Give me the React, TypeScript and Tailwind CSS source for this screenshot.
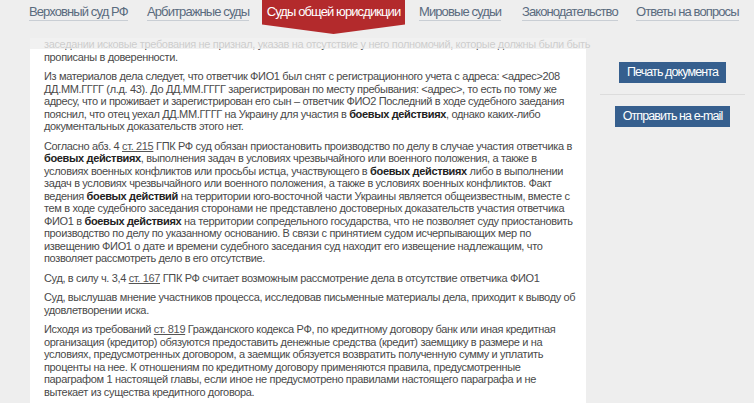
import React from "react";

const navItems = [
    { label: "Верховный суд РФ", active: false, box: "w-[118px]" },
    { label: "Арбитражные суды", active: false, box: "w-[115px]" },
    { label: "Суды общей юрисдикции", active: true, box: "w-[143px] mr-[14px]" },
    { label: "Мировые судьи", active: false, box: "w-[103px]" },
    { label: "Законодательство", active: false, box: "w-[114px]" },
    { label: "Ответы на вопросы", active: false, box: "" },
];

const narrow = "font-['Liberation_Sans',Arial,sans-serif] tracking-[-0.9px]";

function B({ children }: { children: React.ReactNode }) {
    return <b className="font-bold text-[#222]">{children}</b>;
}

function Law({ children }: { children: React.ReactNode }) {
    return <a className="text-[#555] underline underline-offset-1">{children}</a>;
}

export default function App() {
    return (
        <div className="h-[403px] overflow-hidden bg-[#eeeeee] font-['Liberation_Sans',Arial,sans-serif]">
            {/* Header sits over the scrolled text */}
            <header className="relative z-10 h-[49px] bg-[#eeeeee]/80">
                <nav className={`flex whitespace-nowrap pl-[29px] text-[13px] ${narrow}`}>
                    {navItems.map((item) =>
                        item.active ? (
                            <div
                                key={item.label}
                                className={`${item.box} h-[34px] bg-[#b32a2c] pt-[2px] text-center text-white [clip-path:polygon(0_0,100%_0,100%_72%,50%_100%,0_72%)]`}
                            >
                                {item.label}
                            </div>
                        ) : (
                            <div key={item.label} className={`${item.box} pt-[2px]`}>
                                <span className="border-b border-[#c9ced4] pb-px text-[#5a6b7e]">
                                    {item.label}
                                </span>
                            </div>
                        )
                    )}
                </nav>
            </header>

            <div className="-mt-[11px] flex">
                {/* Document text */}
                <main className="ml-[30px] w-[556px] whitespace-nowrap bg-white pl-[14px] pr-[10px] text-[11px] leading-[12.5px] tracking-[-0.35px] text-[#4a4a4a]">
                    <p className="mb-[7px]">
                        заседании исковые требования не признал, указав на отсутствие у него полномочий, которые должны были быть
                        <br />
                        прописаны в доверенности.
                    </p>
                    <p className="mb-[7px]">
                        Из материалов дела следует, что ответчик ФИО1 был снят с регистрационного учета с адреса: &lt;адрес&gt;208
                        <br />
                        ДД.ММ.ГГГГ (л.д. 43). До ДД.ММ.ГГГГ зарегистрирован по месту пребывания: &lt;адрес&gt;, то есть по тому же
                        <br />
                        адресу, что и проживает и зарегистрирован его сын – ответчик ФИО2 Последний в ходе судебного заедания
                        <br />
                        пояснил, что отец уехал ДД.ММ.ГГГГ на Украину для участия в <B>боевых действиях</B>, однако каких-либо
                        <br />
                        документальных доказательств этого нет.
                    </p>
                    <p className="mb-[7px]">
                        Согласно абз. 4 <Law>ст. 215</Law> ГПК РФ суд обязан приостановить производство по делу в случае участия ответчика в
                        <br />
                        <B>боевых действиях</B>, выполнения задач в условиях чрезвычайного или военного положения, а также в
                        <br />
                        условиях военных конфликтов или просьбы истца, участвующего в <B>боевых действиях</B> либо в выполнении
                        <br />
                        задач в условиях чрезвычайного или военного положения, а также в условиях военных конфликтов. Факт
                        <br />
                        ведения <B>боевых действий</B> на территории юго-восточной части Украины является общеизвестным, вместе с
                        <br />
                        тем в ходе судебного заседания сторонами не представлено достоверных доказательств участия ответчика
                        <br />
                        ФИО1 в <B>боевых действиях</B> на территории сопредельного государства, что не позволяет суду приостановить
                        <br />
                        производство по делу по указанному основанию. В связи с принятием судом исчерпывающих мер по
                        <br />
                        извещению ФИО1 о дате и времени судебного заседания суд находит его извещение надлежащим, что
                        <br />
                        позволяет рассмотреть дело в его отсутствие.
                    </p>
                    <p className="mb-[7px]">
                        Суд, в силу ч. 3,4 <Law>ст. 167</Law> ГПК РФ считает возможным рассмотрение дела в отсутствие ответчика ФИО1
                    </p>
                    <p className="mb-[7px]">
                        Суд, выслушав мнение участников процесса, исследовав письменные материалы дела, приходит к выводу об
                        <br />
                        удовлетворении иска.
                    </p>
                    <p className="mb-[7px]">
                        Исходя из требований <Law>ст. 819</Law> Гражданского кодекса РФ, по кредитному договору банк или иная кредитная
                        <br />
                        организация (кредитор) обязуются предоставить денежные средства (кредит) заемщику в размере и на
                        <br />
                        условиях, предусмотренных договором, а заемщик обязуется возвратить полученную сумму и уплатить
                        <br />
                        проценты на нее. К отношениям по кредитному договору применяются правила, предусмотренные
                        <br />
                        параграфом 1 настоящей главы, если иное не предусмотрено правилами настоящего параграфа и не
                        <br />
                        вытекает из существа кредитного договора.
                    </p>
                </main>

                {/* Sidebar actions */}
                <aside className={`flex flex-1 flex-col items-center whitespace-nowrap pl-[14px] pr-[9px] pt-[24px] ${narrow}`}>
                    <button className="h-[21px] bg-[#365f8e] px-[8px] text-[12.5px] leading-[21px] text-white">
                        Печать документа
                    </button>
                    <div className="mt-[11px] h-px w-full bg-[#dcdcdc]" />
                    <button className="mt-[11px] h-[21px] bg-[#365f8e] px-[8px] text-[12.5px] leading-[21px] text-white">
                        Отправить на e-mail
                    </button>
                </aside>
            </div>
        </div>
    );
}
